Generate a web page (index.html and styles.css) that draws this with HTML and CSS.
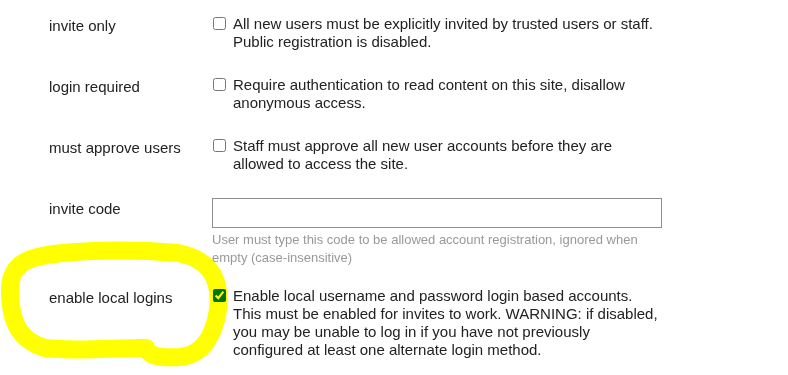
FILE: index.html
```html
<!DOCTYPE html>
<html>
<head>
  <link rel="stylesheet" href="styles.css">
</head>

<body>
  <div class="settings">
    <div class="row">
      <label class="name" for="invite-only">invite only</label>
      <label class="field check">
        <input type="checkbox" id="invite-only">
        <span>All new users must be explicitly invited by trusted users or staff. Public registration is disabled.</span>
      </label>
    </div>

    <div class="row">
      <label class="name" for="login-required">login required</label>
      <label class="field check">
        <input type="checkbox" id="login-required">
        <span>Require authentication to read content on this site, disallow anonymous access.</span>
      </label>
    </div>

    <div class="row">
      <label class="name" for="must-approve">must approve users</label>
      <label class="field check">
        <input type="checkbox" id="must-approve">
        <span>Staff must approve all new user accounts before they are allowed to access the site.</span>
      </label>
    </div>

    <div class="row with-hint">
      <label class="name" for="invite-code">invite code</label>
      <div class="field">
        <input type="text" id="invite-code" class="text-input">
        <div class="hint">User must type this code to be allowed account registration, ignored when empty (case-insensitive)</div>
      </div>
    </div>

    <div class="row">
      <label class="name" for="local-logins">enable local logins</label>
      <label class="field check">
        <input type="checkbox" id="local-logins" checked>
        <span>Enable local username and password login based accounts. This must be enabled for invites to work. WARNING: if disabled, you may be unable to log in if you have not previously configured at least one alternate login method.</span>
      </label>
    </div>
  </div>

  <!-- highlighter scribble drawn over the screenshot -->
  <svg class="marker" width="788" height="375" viewBox="0 0 788 375">
    <path d="M178 253 C130 249 72 250 42 256 C16 261 9 273 10 295 C11 320 18 340 45 348 C80 352 120 347 146 348 C150 357 160 358 180 357 C202 355 214 336 218 310 C221 284 214 260 178 253 Z"/>
  </svg>
</body>
</html>
```

FILE: styles.css
```css
body {
  margin: 0;
  background: #fff;
  font-family: "Liberation Sans", Arial, sans-serif;
  font-size: 15px;
  line-height: 18px;
  color: #222;
}

.settings {
  padding: 15px 0 0 49px;
}

.row {
  display: grid;
  grid-template-columns: 163px 450px;
  margin-bottom: 25px;
}

.row.with-hint {
  margin-bottom: 20px;
}

.name {
  padding-top: 2px;
}

.check {
  display: flex;
  align-items: flex-start;
}

.check input {
  flex: none;
  width: 13px;
  height: 13px;
  margin: 2px 7px 0 1px;
}

.text-input {
  display: block;
  box-sizing: border-box;
  width: 450px;
  height: 30px;
  margin: 0;
  border: 1px solid #8f8f8f;
  font: inherit;
}

.hint {
  margin-top: 3px;
  color: #999;
  font-size: 13px;
}

.marker {
  position: absolute;
  left: 0;
  top: 0;
  pointer-events: none;
  mix-blend-mode: multiply;
}

.marker path {
  fill: none;
  stroke: #ffff00;
  stroke-width: 18;
  stroke-linejoin: round;
}
```
